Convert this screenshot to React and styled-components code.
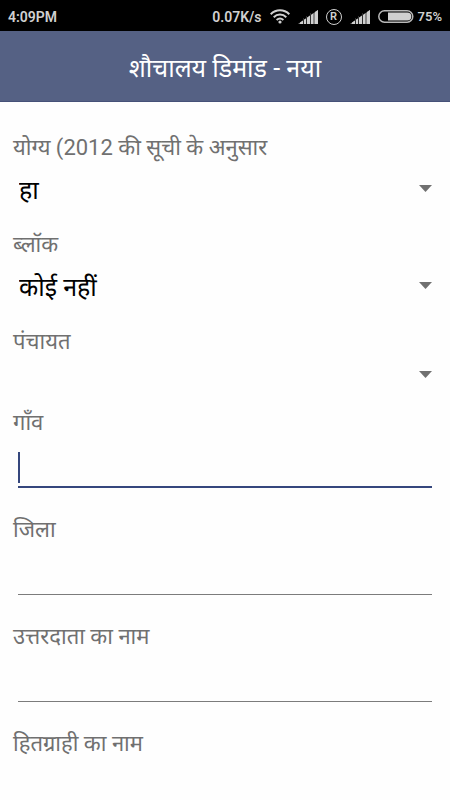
import React, { useState } from 'react';
import styled, { createGlobalStyle } from 'styled-components';

const GlobalStyle = createGlobalStyle`
  * {
    box-sizing: border-box;
  }

  body {
    margin: 0;
    background: #fefefe;
    font-family: Roboto, "Noto Sans Devanagari", "Noto Sans", sans-serif;
  }
`;

const Page = styled.div`
  display: flex;
  flex-direction: column;
  height: 100vh;
`;

const StatusBar = styled.div`
  display: flex;
  flex-shrink: 0;
  align-items: center;
  justify-content: space-between;
  height: 31px;
  padding: 2px 8px 0;
  background: #000;
  color: #d0d0d0;
  font-size: 14px;
  font-weight: 600;
`;

const StatusIcons = styled.div`
  display: flex;
  align-items: center;
  gap: 8px;
`;

const Battery = styled.div`
  display: flex;
  align-items: center;
  gap: 4px;
  font-size: 13px;
`;

const AppBar = styled.header`
  display: flex;
  flex-shrink: 0;
  align-items: center;
  justify-content: center;
  height: 71px;
  padding-top: 6px;
  background: #556184;
  border-bottom: 1px solid #465178;
`;

const Title = styled.h1`
  margin: 0;
  color: #fff;
  font-size: 25px;
  font-weight: 400;
  line-height: 32px;
`;

const Form = styled.form`
  flex: 1;
  min-height: 0;
  padding: 31px 12px 0;
  overflow-y: auto;
  scrollbar-width: none;
`;

const Field = styled.div`
  margin-bottom: ${(props) => props.$gap}px;
`;

const Label = styled.label`
  display: block;
  height: 30px;
  padding-left: 1px;
  color: #707070;
  font-size: 22px;
  line-height: 30px;
  white-space: nowrap;
`;

const SelectBox = styled.div`
  display: flex;
  align-items: center;
  height: ${(props) => (props.$empty ? 34 : 50)}px;
  padding: 0 6px;
`;

const Select = styled.select`
  flex: 1;
  height: 100%;
  min-width: 0;
  padding: 4px 0 0 1px;
  border: 0;
  outline: 0;
  appearance: none;
  background: transparent;
  color: #000;
  font-family: inherit;
  font-size: 25px;
`;

const InputBox = styled.div`
  position: relative;
  height: 50px;
  padding: 0 6px;
`;

const Input = styled.input`
  display: block;
  width: 100%;
  height: 100%;
  padding: 12px 2px 0;
  border: 0;
  border-bottom: ${(props) => (props.$active ? '2px solid #35477d' : '1px solid #7c7c7c')};
  border-radius: 0;
  outline: 0;
  background: transparent;
  caret-color: ${(props) => (props.$active && props.value ? '#35477d' : 'transparent')};
  font-family: inherit;
  font-size: 25px;
`;

const Cursor = styled.span`
  position: absolute;
  left: 6px;
  top: 14px;
  width: 2px;
  height: 31px;
  background: #35477d;
`;

const Roaming = styled.span`
  display: flex;
  align-items: center;
  justify-content: center;
  width: 16px;
  height: 16px;
  border: 1px solid #d0d0d0;
  border-radius: 50%;
  font-size: 11px;
  line-height: 14px;
`;

function Wifi() {
  return (
    <svg width="20" height="15" viewBox="0 0 20 15" fill="none" stroke="#d0d0d0" strokeWidth="2">
      <path d="M0.7 5.2C6 0 14 0 19.3 5.2" />
      <path d="M3.7 8.2C7.3 4.7 12.7 4.7 16.3 8.2" />
      <path d="M6.6 11C8.6 9.2 11.4 9.2 13.4 11" />
      <circle cx="10" cy="13" r="1.6" fill="#d0d0d0" stroke="none" />
    </svg>
  );
}

function Signal() {
  return (
    <svg width="20" height="14" viewBox="0 0 20 14">
      <path d="M0 14L20 0v14z" fill="#8a8a8a" />
      <path
        d="M2 14v-1.4l3-2.1V14zM6 14V9.8l2-1.4V14zM9 14V7.7l3-2.1V14zM13 14V4.9l2-1.4V14zM17 14V2.1L20 0v14z"
        fill="#d0d0d0"
      />
      <path d="M5 8v6h1V8zM8 6v8h1V6zM12 3v11h1V3z" fill="#303030" />
    </svg>
  );
}

function BatteryIcon() {
  return (
    <svg width="36" height="13" viewBox="0 0 36 13">
      <rect x="0.8" y="0.8" width="34" height="11.4" rx="5.7" fill="none" stroke="#b8b8b8" strokeWidth="1.5" />
      <path d="M10 2.5H29.3a4 4 0 0 1 0 8H10z" fill="#d0d0d0" />
    </svg>
  );
}

function Arrow() {
  return (
    <svg width="13" height="7" viewBox="0 0 13 7">
      <path d="M0 0h13L6.5 7z" fill="#707070" />
    </svg>
  );
}

function SelectField({ id, label, options }) {
  return (
    <Field $gap={17}>
      <Label htmlFor={id}>{label}</Label>
      <SelectBox $empty={options.length === 0}>
        <Select id={id}>
          {options.map((option) => (
            <option key={option}>{option}</option>
          ))}
        </Select>
        <Arrow />
      </SelectBox>
    </Field>
  );
}

function TextField({ id, label, active, onFocus }) {
  const [value, setValue] = useState('');

  return (
    <Field $gap={27}>
      <Label htmlFor={id}>{label}</Label>
      <InputBox>
        <Input
          id={id}
          type="text"
          value={value}
          $active={active}
          onFocus={onFocus}
          onChange={(e) => setValue(e.target.value)}
        />
        {active && !value && <Cursor />}
      </InputBox>
    </Field>
  );
}

const textFields = [
  { id: 'village', label: 'गाँव' },
  { id: 'district', label: 'जिला' },
  { id: 'respondent', label: 'उत्तरदाता का नाम' },
  { id: 'beneficiary', label: 'हितग्राही का नाम' },
];

export default function App() {
  const [active, setActive] = useState('village');

  return (
    <Page>
      <GlobalStyle />
      <StatusBar>
        <span>4:09PM</span>
        <StatusIcons>
          <span>0.07K/s</span>
          <Wifi />
          <Signal />
          <Roaming>R</Roaming>
          <Signal />
          <Battery>
            <BatteryIcon />
            75%
          </Battery>
        </StatusIcons>
      </StatusBar>
      <AppBar>
        <Title>शौचालय डिमांड - नया</Title>
      </AppBar>
      <Form>
        <SelectField id="eligible" label="योग्य (2012 की सूची के अनुसार" options={['हा']} />
        <SelectField id="block" label="ब्लॉक" options={['कोई नहीं']} />
        <SelectField id="panchayat" label="पंचायत" options={[]} />
        {textFields.map((field) => (
          <TextField
            key={field.id}
            id={field.id}
            label={field.label}
            active={active === field.id}
            onFocus={() => setActive(field.id)}
          />
        ))}
      </Form>
    </Page>
  );
}
